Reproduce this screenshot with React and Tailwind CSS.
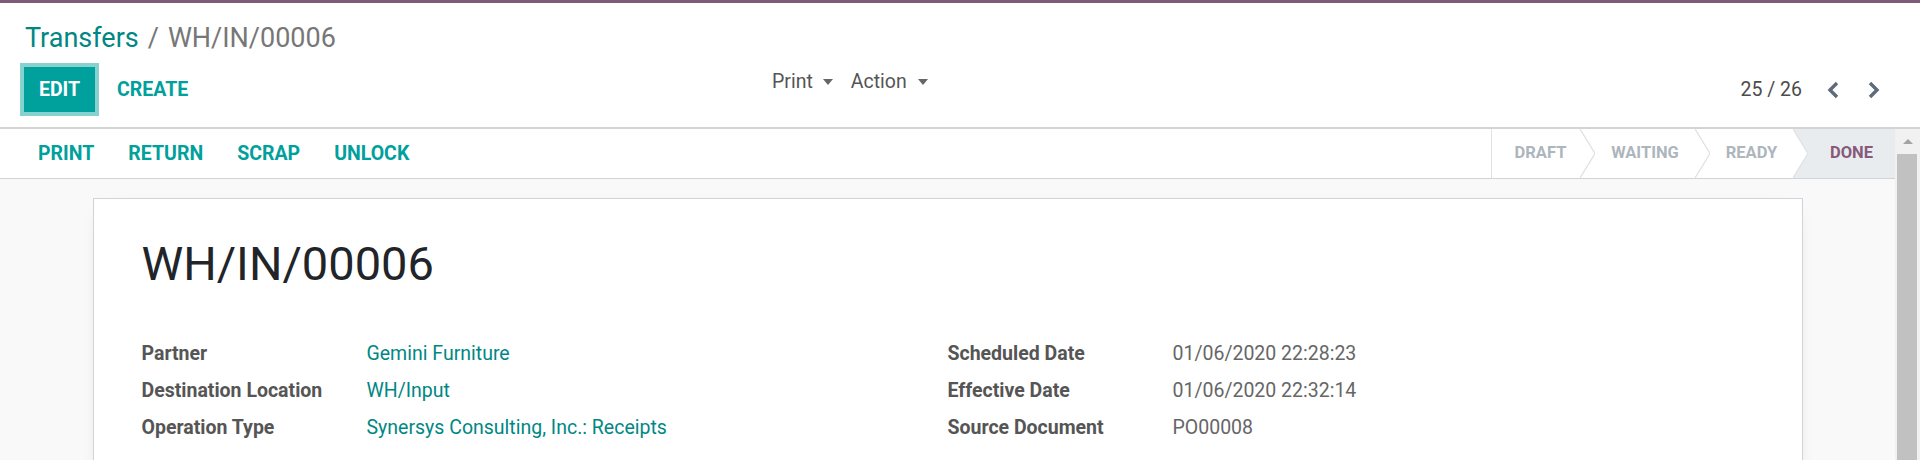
import React from "react";

const LEFT_FIELDS = [
  { label: "Partner", value: "Gemini Furniture", link: true },
  { label: "Destination Location", value: "WH/Input", link: true },
  { label: "Operation Type", value: "Synersys Consulting, Inc.: Receipts", link: true },
];

const RIGHT_FIELDS = [
  { label: "Scheduled Date", value: "01/06/2020 22:28:23" },
  { label: "Effective Date", value: "01/06/2020 22:32:14" },
  { label: "Source Document", value: "PO00008" },
];

function Caret() {
  return <span className="inline-block w-0 h-0 border-t-[6px] border-t-[#666] border-x-[5.5px] border-x-transparent" />;
}

function Chevron({ dir }) {
  const pts = dir === "left" ? "10,2 3,9 10,16" : "2,2 9,9 2,16";
  return (
    <svg width="12" height="18" viewBox="0 0 12 18" className="block">
      <polyline points={pts} fill="none" stroke="#5f6b7a" strokeWidth="3.4" />
    </svg>
  );
}

function Arrow({ filled }) {
  return (
    <svg width="15" height="49" viewBox="0 0 15 49" className="block shrink-0">
      {filled && <polygon points="0,0 15,0 15,49 0,49 15,24.5" fill="#e9ecef" />}
      <polyline points="0,0 15,24.5 0,49" fill="none" stroke="#dee2e6" strokeWidth="1.3" />
    </svg>
  );
}

function ControlPanel() {
  return (
    <div className="bg-white border-b-2 border-[#d3d3d3] pt-[15px] pb-[15px]">
      <div className="pl-[25px] h-[40px] leading-[40px] text-[27px] whitespace-nowrap">
        <span className="text-[#008784]">Transfers</span>
        <span className="text-[#777] mx-[9px]">/</span>
        <span className="text-[#777]">WH/IN/00006</span>
      </div>
      <div className="mt-[9px] h-[45px] grid grid-cols-[772px_1fr_auto]">
        <div className="flex items-center pl-[24px]">
          <button className="w-[71px] h-[45px] bg-[#00a09d] ring-4 ring-[#87d1cf] text-white font-bold text-[19.5px]">
            EDIT
          </button>
          <button className="ml-[22px] text-[#00a09d] font-bold text-[19.5px]">CREATE</button>
        </div>
        <div className="flex items-center h-[30px] text-[19.5px] text-[#555]">
          <span>Print</span>
          <span className="ml-[10px] flex"><Caret /></span>
          <span className="ml-[18px]">Action</span>
          <span className="ml-[11px] flex"><Caret /></span>
        </div>
        <div className="flex items-center pr-[40px] text-[19.5px] text-[#4c4c4c]">
          <span>25 / 26</span>
          <span className="ml-[25px]"><Chevron dir="left" /></span>
          <span className="ml-[29px]"><Chevron dir="right" /></span>
        </div>
      </div>
    </div>
  );
}

function StatusBar() {
  const item = "flex items-center justify-center h-full text-[16.5px] font-bold";
  return (
    <div className="h-[50px] shrink-0 bg-white border-b border-[#ced4da] flex justify-between">
      <div className="flex items-center gap-[34px] pl-[38px] text-[19.5px] font-bold text-[#00a09d]">
        <button>PRINT</button>
        <button>RETURN</button>
        <button>SCRAP</button>
        <button>UNLOCK</button>
      </div>
      <div className="flex h-[49px]">
        <div className={`${item} w-[89px] pl-[9px] border-l border-[#dee2e6] text-[#adb5bd]`}>DRAFT</div>
        <Arrow />
        <div className={`${item} w-[100px] text-[#adb5bd]`}>WAITING</div>
        <Arrow />
        <div className={`${item} w-[83px] text-[#adb5bd]`}>READY</div>
        <Arrow filled />
        <div className={`${item} w-[87px] bg-[#e9ecef] text-[#875a7b]`}>DONE</div>
      </div>
    </div>
  );
}

function FieldGroup({ fields }) {
  return (
    <div className="flex flex-col">
      {fields.map((f) => (
        <div key={f.label} className="flex h-[37px] leading-[37px] text-[19.5px] whitespace-nowrap">
          <span className="w-[225px] shrink-0 font-bold text-[#555]">{f.label}</span>
          <span className={f.link ? "text-[#008784]" : "text-[#666]"}>{f.value}</span>
        </div>
      ))}
    </div>
  );
}

function Scrollbar() {
  return (
    <div className="w-[25px] shrink-0 bg-[#f1f1f1] flex flex-col">
      <div className="h-[25px] flex items-center justify-center">
        <span className="w-0 h-0 border-b-[5px] border-b-[#a3a3a3] border-x-[5px] border-x-transparent" />
      </div>
      <div className="flex-1 ml-[2px] mr-[3px] bg-[#c1c1c1]" />
    </div>
  );
}

export default function App() {
  return (
    <div className="w-full h-[460px] overflow-hidden flex flex-col bg-white font-[Roboto,sans-serif]">
      <div className="h-[3px] shrink-0 bg-[#7d5c77]" />
      <ControlPanel />
      <div className="flex flex-1 min-h-0">
        <div className="flex-1 min-w-0 flex flex-col">
          <StatusBar />
          <div className="flex-1 bg-[#f9f9f9] pt-[19px]">
            <div className="w-[1710px] mx-auto bg-white border border-[#ced4da] shadow-[0_5px_20px_-15px_rgba(0,0,0,0.4)] px-[48px] pt-[36px] pb-[40px]">
              <h1 className="text-[47px] leading-[58px] text-[#212529]">WH/IN/00006</h1>
              <div className="mt-[42px] grid grid-cols-2">
                <FieldGroup fields={LEFT_FIELDS} />
                <FieldGroup fields={RIGHT_FIELDS} />
              </div>
            </div>
          </div>
        </div>
        <Scrollbar />
      </div>
    </div>
  );
}
